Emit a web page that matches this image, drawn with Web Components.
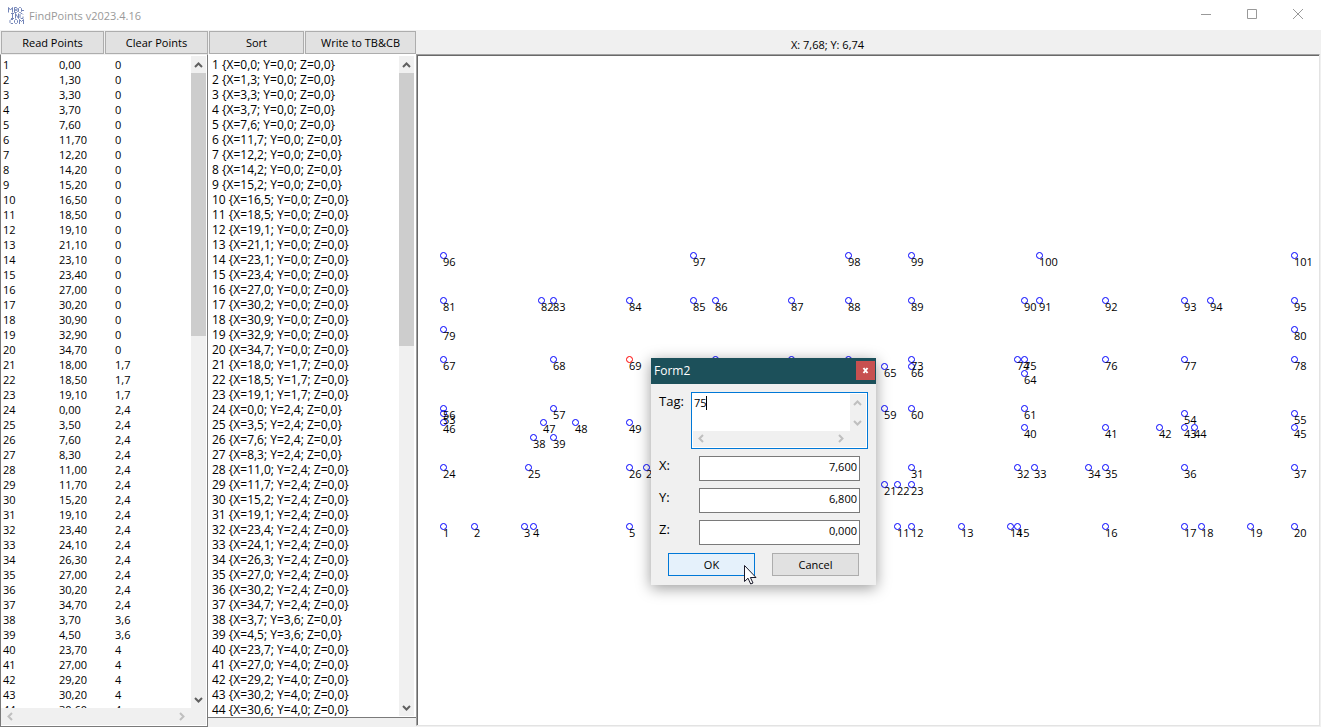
<!DOCTYPE html>
<html lang="en">
<head>
<meta charset="utf-8">
<title>FindPoints v2023.4.16</title>
<style>
html, body { margin: 0; height: 100%; }
body { font: 11px/15px "Open Sans", "Noto Sans", sans-serif; color: #000; background: #f0f0f0; overflow: hidden; }
</style>
</head>
<body>
<find-points-app></find-points-app>

<template id="app-tpl">
<style>
:host { display: flex; flex-direction: column; height: 100%; position: relative; }
main { flex: 1; min-height: 0; display: grid; grid-template-columns: 208px 208px minmax(0, 1fr); grid-template-rows: 24px minmax(0, 1fr); padding-right: 1px; }
.bar { display: flex; gap: 1px; padding: 1px 0 0 1px; grid-column: 1 / 3; }
.bar win-button:nth-child(1), .bar win-button:nth-child(2) { flex: 0 0 103px; }
.bar win-button:nth-child(3) { flex: 0 0 95px; }
.bar win-button:nth-child(4) { flex: 1; }
output { text-align: center; line-height: 30px; padding-right: 81px; }
.list { margin-bottom: 9px; }
.plot { margin-bottom: 1px; }
form-dialog { position: absolute; left: 651px; top: 358px; }
.cursor { position: absolute; left: 744px; top: 565px; }
</style>
<title-bar>FindPoints v2023.4.16</title-bar>
<main>
<div class="bar">
<win-button>Read Points</win-button><win-button>Clear Points</win-button><win-button>Sort</win-button><win-button>Write to TB&amp;CB</win-button>
</div>
<output>X: 7,68; Y: 6,74</output>
<text-pane></text-pane>
<list-pane class="list"></list-pane>
<point-plot class="plot"></point-plot>
</main>
<form-dialog></form-dialog>
<svg class="cursor" width="13" height="20" viewBox="0 0 13 20" aria-hidden="true"><path d="M.5.500v16l3.500-3.300 2.700 5.800 2.300-1-2.600-5.500H12z" fill="#fff" stroke="#1a1a2a"/></svg>
</template>

<template id="title-tpl">
<style>
:host { display: flex; align-items: center; height: 30px; background: #fff; color: #999; font-size: 11px; }
svg { display: block; }
.logo { margin: 0 5px 0 8px; }
span { flex: 1; }
button { all: unset; width: 46px; height: 30px; display: grid; place-items: center; }
</style>
<svg class="logo" width="16" height="17" viewBox="0 0 16 17" fill="none" stroke="#7385b8" aria-hidden="true"><path d="M.5 5.500V.5L2.500 3 4.500.5v5M6.500.5v5h2l1-1-1-1.500h-2 2l1-1-1-1.500zM11.500.5h1l1 1v3l-1 1h-1l-1-1v-3zM14 3.500h2M3 6.500h3M4.500 6.500v5M3 11.500h3M7.500 11.500v-5l3 5v-5M15 7.500l-1-1h-1l-1 1v3l1 1h2v-2M5 12.500H3l-1 1v2l1 1h2M7.500 12.500h1l1 1v2l-1 1h-1l-1-1v-2zM11.500 17v-4.500l2 2 2-2V17"/></svg>
<span><slot></slot></span>
<button aria-label="Minimize"><svg width="12" height="12" fill="none" stroke="#999"><path d="M1 5.500h10"/></svg></button>
<button aria-label="Maximize"><svg width="12" height="12" fill="none" stroke="#999"><path d="M1.500.5h9v9h-9z"/></svg></button>
<button aria-label="Close"><svg width="12" height="12" fill="none" stroke="#999"><path d="M1 0l10 10M11 0L1 10"/></svg></button>
</template>

<template id="button-tpl">
<style>
:host { display: block; height: 23px; }
button { box-sizing: border-box; width: 100%; height: 100%; margin: 0; padding: 0; border: 1px solid #adadad; border-radius: 0; background: #e1e1e1; color: #000; font: inherit; }
:host([default]) button { border-color: #0078d7; background: #e5f1fb; }
</style>
<button type="button"><slot></slot></button>
</template>

<template id="scroll-tpl">
<style>
:host { display: flex; flex-direction: column; width: 15px; background: #f0f0f0; --ink: #606060; }
:host([horizontal]) { flex-direction: row; width: auto; height: 15px; justify-content: space-between; }
:host([disabled]) { --ink: #bfbfbf; }
svg { width: 15px; height: 17px; flex: none; fill: none; stroke: var(--ink); stroke-width: 2; }
:host([horizontal]) svg { width: 17px; height: 15px; }
.track { flex: 1; }
.thumb { height: var(--thumb, 0); background: #cdcdcd; }
.h, :host([horizontal]) .v { display: none; }
:host([horizontal]) .h { display: block; }
</style>
<svg class="v" viewBox="0 0 15 17"><path d="M4 11l3.500-3.500L11 11"/></svg>
<svg class="h" viewBox="0 0 17 15"><path d="M10 4L6.500 7.500 10 11"/></svg>
<div class="track"><div class="thumb"></div></div>
<svg class="v" viewBox="0 0 15 17"><path d="M4 7l3.500 3.500L11 7"/></svg>
<svg class="h" viewBox="0 0 17 15"><path d="M7 4l3.500 3.500L7 11"/></svg>
</template>

<template id="text-tpl">
<style>
:host { display: grid; grid-template-columns: minmax(0, 1fr) 15px; grid-template-rows: minmax(0, 1fr) 17px; border: 1px solid #7a7a7a; border-top-color: #f0f0f0; background: #fff; padding: 1px 1px 1px 0; }
textarea { border: 0; outline: 0; margin: 0; padding: 1px 2px 0; resize: none; overflow: hidden; font: inherit; color: inherit; background: none; white-space: pre; tab-size: 56px; }
.v { --thumb: 263px; }
.h { grid-column: 1 / 3; height: 17px; padding: 1px 16px 0 1px; box-sizing: border-box; }
</style>
<textarea readonly aria-label="Point table"></textarea>
<scroll-bar class="v"></scroll-bar>
<scroll-bar class="h" horizontal disabled></scroll-bar>
</template>

<template id="list-tpl">
<style>
:host { display: flex; border-bottom: 1px solid #7a7a7a; background: #fff; padding: 2px 2px 1px 1px; }
select { flex: 1; min-width: 0; border: 0; outline: 0; border-radius: 0; margin: 0; padding: 0; overflow: hidden; font: inherit; font-size: 12px; line-height: 15px; color: inherit; background: none; }
option { padding: 0 3px; min-height: 15px; height: 15px; line-height: 15px; box-sizing: border-box; }
scroll-bar { --thumb: 273px; }
</style>
<select size="44" aria-label="Points"></select>
<scroll-bar></scroll-bar>
</template>

<template id="plot-tpl">
<style>
:host { display: block; border: 1px solid #a0a0a0; border-right-color: #e3e3e3; border-bottom-color: #e3e3e3; box-shadow: inset 1px 1px #696969; background: #fff; overflow: hidden; }
svg { display: block; width: 100%; height: 100%; }
circle { fill: none; stroke: #00f; }
.active { stroke: #f00; }
</style>
<svg role="img" aria-label="Point plot"></svg>
</template>

<template id="dialog-tpl">
<style>
:host { display: block; width: 225px; background: #f0f0f0; box-shadow: 0 3px 14px rgba(0,0,0,.4); }
header { display: flex; align-items: center; height: 26px; padding: 0 1px 2px 3px; box-sizing: border-box; background: #1c505a; color: #fff; font-size: 12px; }
header span { flex: 1; }
header button { border: 0; margin: 0; padding: 0; width: 19px; height: 19px; background: #c75050; display: grid; place-items: center; }
form { display: grid; grid-template-columns: 32px 1fr; row-gap: 7px; padding: 8px 8px 9px; }
label { font-size: 13px; line-height: 19px; }
.memo { position: relative; height: 57px; box-sizing: border-box; border: 1px solid #0078d7; background: #fff; padding: 1px; display: grid; grid-template-columns: minmax(0, 1fr) 16px; grid-template-rows: minmax(0, 1fr) 16px; }
textarea { border: 0; outline: 0; margin: 0; padding: 1px; resize: none; overflow: hidden; font: inherit; line-height: 16px; color: #000; }
.memo scroll-bar { width: auto; }
.memo .h { grid-column: 1 / 3; height: 16px; padding-right: 17px; }
.caret { position: absolute; left: 14px; top: 3px; width: 1px; height: 14px; background: #000; }
input { box-sizing: border-box; width: 161px; height: 25px; margin: 0 0 0 8px; border: 1px solid #7a7a7a; border-radius: 0; padding: 0 2px 4px; font: inherit; text-align: right; color: #000; background: #fff; }
footer { grid-column: 1 / 3; display: flex; gap: 17px; padding: 1px 9px 0; }
footer win-button { flex: 1; }
</style>
<header><span>Form2</span><button type="button" aria-label="Close"><svg width="7" height="7" fill="none" stroke="#fff" stroke-width="2"><path d="M1.500 1l4 5M5.500 1l-4 5"/></svg></button></header>
<form>
<label for="tag">Tag:</label>
<div class="memo"><textarea id="tag">75</textarea><scroll-bar disabled></scroll-bar><scroll-bar class="h" horizontal disabled></scroll-bar><i class="caret"></i></div>
<label for="x">X:</label><input id="x" value="7,600">
<label for="y">Y:</label><input id="y" value="6,800">
<label for="z">Z:</label><input id="z" value="0,000">
<footer><win-button default>OK</win-button><win-button>Cancel</win-button></footer>
</form>
</template>

<script>
// Rows of points sharing one Y: [y, first tag, list of X]
const TABLE = [
  [0, 1, [0, 1.3, 3.3, 3.7, 7.6, 11.7, 12.2, 14.2, 15.2, 16.5, 18.5, 19.1, 21.1, 23.1, 23.4, 27, 30.2, 30.9, 32.9, 34.7]],
  [1.7, 21, [18, 18.5, 19.1]],
  [2.4, 24, [0, 3.5, 7.6, 8.3, 11, 11.7, 15.2, 19.1, 23.4, 24.1, 26.3, 27, 30.2, 34.7]],
  [3.6, 38, [3.7, 4.5]],
  [4, 40, [23.7, 27, 29.2, 30.2, 30.6]]
];
const UPPER = [
  [4, 45, [34.7]],
  [4.2, 46, [0, 4.1, 5.4, 7.6]],
  [4.6, 53, [0, 30.2, 34.7]],
  [4.8, 56, [0, 4.5]],
  [4.8, 59, [18, 19.1, 23.7]],
  [6.2, 64, [23.7]],
  [6.5, 65, [18, 19.1]],
  [6.8, 67, [0, 4.5, 7.6, 11.1, 14.2, 16.5, 19.1, 23.4, 23.7, 27, 30.2, 34.7]],
  [8, 79, [0, 34.7]],
  [9.2, 81, [0, 4, 4.5, 7.6, 10.2, 11.1, 14.2, 16.5, 19.1, 23.7, 24.3, 27, 30.2, 31.25, 34.7]],
  [11.04, 96, [0, 10.2, 16.5, 19.1, 24.3, 34.7]]
];
const expand = rows => rows.flatMap(([y, tag, xs]) => xs.map((x, i) => ({ tag: tag + i, x, y })));
const comma = (n, digits) => n.toFixed(digits).replace('.', ',');

function define(name, templateId, setup) {
  customElements.define(name, class extends HTMLElement {
    constructor() {
      super();
      this.attachShadow({ mode: 'open' }).append(document.getElementById(templateId).content.cloneNode(true));
      if (setup) setup(this.shadowRoot);
    }
  });
}

define('scroll-bar', 'scroll-tpl');
define('win-button', 'button-tpl');
define('title-bar', 'title-tpl');
define('text-pane', 'text-tpl', root => {
  root.querySelector('textarea').textContent = expand(TABLE)
    .map(p => `${p.tag}\t${comma(p.x, 2)}\t${String(p.y).replace('.', ',')}`).join('\n');
});
define('list-pane', 'list-tpl', root => {
  const select = root.querySelector('select');
  for (const p of expand(TABLE)) {
    const option = document.createElement('option');
    option.textContent = `${p.tag} {X=${comma(p.x, 1)}; Y=${comma(p.y, 1)}; Z=0,0}`;
    select.append(option);
  }
});
define('point-plot', 'plot-tpl', root => {
  const svg = root.querySelector('svg');
  const scaleX = 24.55, scaleY = 24.53, left = 26, base = 472;
  const make = (tag, attrs) => {
    const el = document.createElementNS('http://www.w3.org/2000/svg', tag);
    for (const k in attrs) el.setAttribute(k, attrs[k]);
    svg.append(el);
    return el;
  };
  for (const p of expand([...TABLE, ...UPPER])) {
    const cx = Math.floor(left + p.x * scaleX), cy = Math.floor(base - p.y * scaleY);
    // The open form covers this part of the canvas
    const column = cx > 236 && cx < 456;
    if (column && cy > 306) continue;
    // Half-pixel centres keep the one-pixel rings crisp
    make('circle', { cx: cx + 0.5, cy: cy - 0.5, r: 3, class: p.tag === 69 ? 'active' : '' });
    if (column && cy > 296) continue;
    make('text', { x: cx, y: cy + 10 }).textContent = p.tag;
  }
});
define('form-dialog', 'dialog-tpl');
define('find-points-app', 'app-tpl');
</script>
</body>
</html>
